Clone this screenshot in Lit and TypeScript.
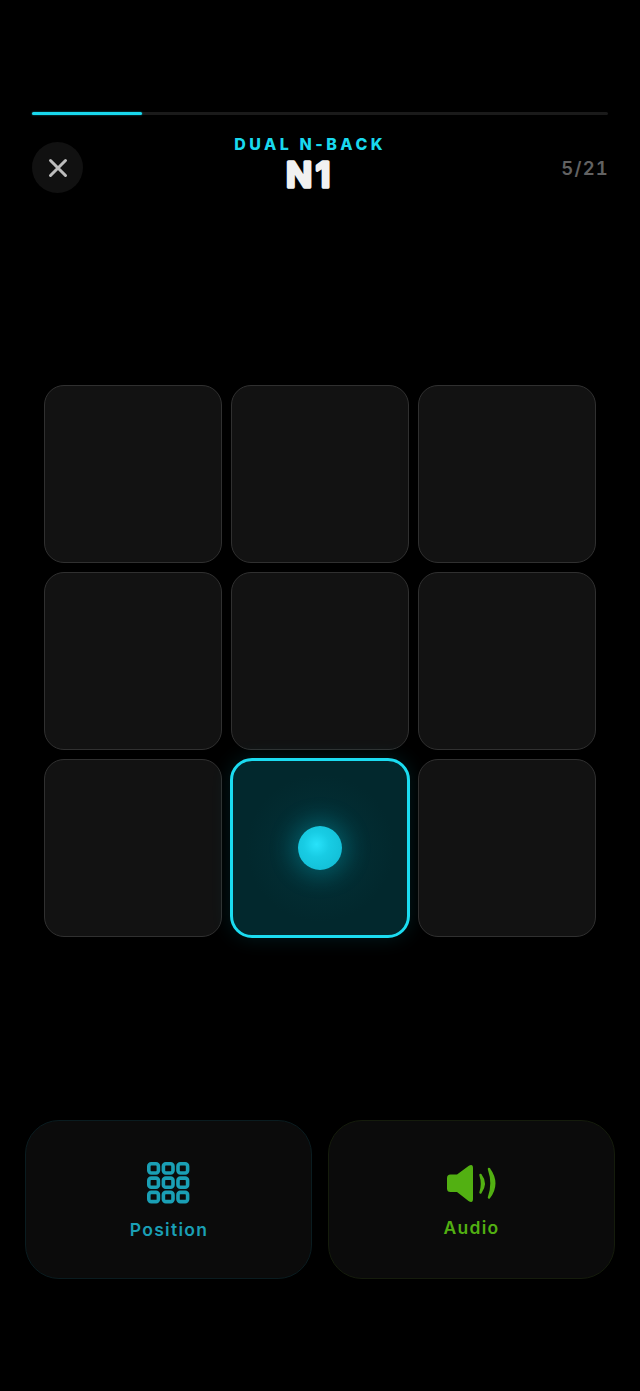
import { LitElement, html, css, svg } from "lit";
import { customElement, property } from "lit/decorators.js";

@customElement("grid-cell")
export class GridCell extends LitElement {
  @property({ type: Boolean }) active = false;

  static styles = css`
    :host {
      display: block;
      min-width: 0;
    }
    .cell {
      box-sizing: border-box;
      height: 100%;
      background: #121212;
      border: 1px solid #303030;
      border-radius: 20px;
    }
    .cell.on {
      display: flex;
      align-items: center;
      justify-content: center;
      margin: -1px;
      height: calc(100% + 2px);
      background: radial-gradient(circle at center, #033239 0%, #02282d 60%);
      border: 3px solid #1bdcf1;
      border-radius: 22px;
      box-shadow: 0 0 20px rgba(0, 220, 245, 0.12);
    }
    .dot {
      width: 44px;
      height: 44px;
      border-radius: 50%;
      background: radial-gradient(circle at 42% 42%, #28e2fa 0%, #18cce4 35%, #10b8d0 100%);
      box-shadow: 0 0 24px 5px rgba(0, 205, 230, 0.3);
    }
  `;

  render() {
    return this.active
      ? html`<div class="cell on"><div class="dot"></div></div>`
      : html`<div class="cell"></div>`;
  }
}

@customElement("app-root")
export class AppRoot extends LitElement {
  static styles = css`
    :host {
      display: block;
      height: 1391px;
      background: #000;
      font-family: "Inter", "Liberation Sans", sans-serif;
      overflow: hidden;
    }
    .top {
      padding: 112px 32px 0;
    }
    .bar {
      height: 3px;
      background: #1a1a1a;
      border-radius: 2px;
    }
    .fill {
      height: 100%;
      background: #19d9ee;
      border-radius: 2px;
      box-shadow: 0 0 2px rgba(25, 217, 238, 0.6);
    }
    .header {
      display: flex;
      align-items: flex-start;
      height: 51px;
      margin-top: 27px;
    }
    .close {
      flex: none;
      display: flex;
      align-items: center;
      justify-content: center;
      width: 51px;
      height: 51px;
      border-radius: 50%;
      background: #111;
    }
    .title {
      flex: 1;
      display: flex;
      flex-direction: column;
      align-items: center;
      margin-top: -7px;
      padding-right: 24px;
    }
    .label {
      font-size: 16px;
      line-height: 18px;
      font-weight: 800;
      letter-spacing: 3.5px;
      color: #19d9ee;
    }
    .level {
      display: block;
      margin-top: 6px;
      overflow: visible;
    }
    .level text {
      font-family: "Inter", sans-serif;
      font-size: 34.5px;
      font-weight: 600;
      letter-spacing: 3.5px;
      fill: #f1f1f1;
      stroke: #f1f1f1;
      stroke-width: 3.4px;
      stroke-linejoin: round;
    }
    .count {
      flex: none;
      align-self: center;
      font-size: 18.5px;
      font-weight: 600;
      font-variant-numeric: tabular-nums;
      letter-spacing: 1.2px;
      margin-right: -1px;
      color: #626262;
    }
    .board {
      display: grid;
      grid-template-columns: repeat(3, 178px);
      grid-template-rows: repeat(3, 178px);
      gap: 9px;
      margin: 192px 0 0 44px;
    }
    .actions {
      display: flex;
      gap: 16px;
      margin: 183px 25px 0;
    }
    .action {
      flex: 1;
      box-sizing: border-box;
      height: 159px;
      display: flex;
      flex-direction: column;
      align-items: center;
      background: #0b0b0b;
      border-radius: 34px;
    }
    .action.pos {
      border: 1px solid #0a1c20;
      padding-top: 41px;
      color: #1a9fb5;
    }
    .action.aud {
      border: 1px solid #151c0c;
      padding-top: 44px;
      color: #52b012;
    }
    .action span {
      font-size: 17.5px;
      line-height: 22px;
      font-weight: 600;
      letter-spacing: 1.3px;
    }
    .pos span {
      margin-top: 15px;
      margin-left: 1px;
    }
    .aud span {
      margin-top: 14px;
    }
    svg {
      display: block;
    }
  `;

  renderGridIcon() {
    const pos = [0, 1, 2];
    return html`<svg width="43" height="42" viewBox="0 0 43 42" fill="none" stroke="currentColor" stroke-width="3.6">
      ${pos.map((r) =>
        pos.map(
          (c) => svg`<rect x=${1.8 + c * 14.6} y=${1.8 + r * 14.3} width="9.6" height="9.2" rx="2.4"></rect>`
        )
      )}
    </svg>`;
  }

  renderSpeakerIcon() {
    return html`<svg width="50" height="38" viewBox="0 0 50 38" fill="currentColor" stroke="currentColor" stroke-linejoin="round">
      <path
        stroke="none"
        d="M3.5 9.5H10L21.5 1Q26 -1.5 26 3V34Q26 38.5 21.5 36L10 27H3.5Q0 27 0 23.5V13Q0 9.5 3.5 9.5Z"
      ></path>
      <path stroke-width="2.4" d="M33.5 10Q40 18.5 33.5 27.5Q36.4 18.5 33.5 10Z"></path>
      <path stroke-width="2.4" d="M42 4Q52.5 18.5 42 32.5Q47 18.5 42 4Z"></path>
    </svg>`;
  }

  render() {
    const cells = [0, 1, 2, 3, 4, 5, 6, 7, 8];
    return html`
      <div class="top">
        <div class="bar"><div class="fill" style="width: ${(5 / 21 - 0.0478) * 100}%"></div></div>
        <div class="header">
          <div class="close">
            <svg width="20" height="20" viewBox="0 0 20 20" fill="none" stroke="#bdbdbd" stroke-width="3" stroke-linecap="round">
              <path d="M2.5 2.5L17.5 17.5M17.5 2.5L2.5 17.5"></path>
            </svg>
          </div>
          <div class="title">
            <div class="label">DUAL N-BACK</div>
            <svg class="level" width="48" height="32" viewBox="0 0 48 32">
              <text x="24" y="28" text-anchor="middle">N1</text>
            </svg>
          </div>
          <div class="count">5/21</div>
        </div>
      </div>
      <div class="board">
        ${cells.map((i) => html`<grid-cell ?active=${i === 7}></grid-cell>`)}
      </div>
      <div class="actions">
        <div class="action pos">${this.renderGridIcon()}<span>Position</span></div>
        <div class="action aud">${this.renderSpeakerIcon()}<span>Audio</span></div>
      </div>
    `;
  }
}
